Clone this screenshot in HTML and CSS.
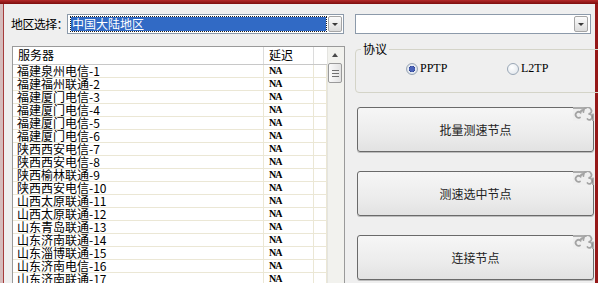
FILE: index.html
```html
<!DOCTYPE html>
<html lang="zh-CN">
<head>
  <meta charset="UTF-8" />
  <title>节点选择</title>
  <link rel="stylesheet" href="styles.css">
</head>
<body>
  <div class="titlebar"></div>
  <div class="window">
    <!-- top row: region + server combos -->
    <div class="toolbar">
      <div class="region">
        <span class="region-label">地区选择：</span>
        <div class="combo">
          <span class="combo-value selected">中国大陆地区</span>
          <span class="combo-btn"><i class="tri"></i></span>
        </div>
      </div>
      <div class="combo server-combo">
        <span class="combo-value"></span>
        <span class="combo-btn"><i class="tri"></i></span>
      </div>
    </div>

    <div class="main">
      <!-- server list -->
      <div class="list">
        <table class="grid">
          <thead>
            <tr><th class="c-name">服务器</th><th class="c-ping">延迟</th><th class="c-pad"></th></tr>
          </thead>
          <tbody>
            <tr><td>福建泉州电信-1</td><td class="na">NA</td><td></td></tr>
            <tr><td>福建福州联通-2</td><td class="na">NA</td><td></td></tr>
            <tr><td>福建厦门电信-3</td><td class="na">NA</td><td></td></tr>
            <tr><td>福建厦门电信-4</td><td class="na">NA</td><td></td></tr>
            <tr><td>福建厦门电信-5</td><td class="na">NA</td><td></td></tr>
            <tr><td>福建厦门电信-6</td><td class="na">NA</td><td></td></tr>
            <tr><td>陕西西安电信-7</td><td class="na">NA</td><td></td></tr>
            <tr><td>陕西西安电信-8</td><td class="na">NA</td><td></td></tr>
            <tr><td>陕西榆林联通-9</td><td class="na">NA</td><td></td></tr>
            <tr><td>陕西西安电信-10</td><td class="na">NA</td><td></td></tr>
            <tr><td>山西太原联通-11</td><td class="na">NA</td><td></td></tr>
            <tr><td>山西太原联通-12</td><td class="na">NA</td><td></td></tr>
            <tr><td>山东青岛联通-13</td><td class="na">NA</td><td></td></tr>
            <tr><td>山东济南联通-14</td><td class="na">NA</td><td></td></tr>
            <tr><td>山东淄博联通-15</td><td class="na">NA</td><td></td></tr>
            <tr><td>山东济南电信-16</td><td class="na">NA</td><td></td></tr>
            <tr><td>山东济南联通-17</td><td class="na">NA</td><td></td></tr>
          </tbody>
        </table>
        <div class="scrollbar">
          <i class="up"></i>
          <div class="thumb"><b></b><b></b><b></b></div>
        </div>
      </div>

      <!-- protocol + actions -->
      <div class="side">
        <fieldset class="group">
          <legend>协议</legend>
          <div class="radios">
            <label class="radio"><span class="dot checked"></span>PPTP</label>
            <label class="radio"><span class="dot"></span>L2TP</label>
          </div>
        </fieldset>

        <button class="action">批量测速节点<svg class="swirl" viewBox="0 0 21 14"><path d="M0 1H13" class="edge" /><path d="M7 10.5a3 3 0 1 1 0.5 -5a3 3 0 0 1 3 -2.5" /><path d="M10.5 5a4 4 0 0 1 8 -1.5a3 3 0 0 1 -3 3.5a3 3 0 0 1 3.5 3a2.6 2.6 0 0 1 -4.5 2" /><path d="M20 7V14" class="edge" /></svg></button>
        <button class="action">测速选中节点<svg class="swirl" viewBox="0 0 21 14"><path d="M0 1H13" class="edge" /><path d="M7 10.5a3 3 0 1 1 0.5 -5a3 3 0 0 1 3 -2.5" /><path d="M10.5 5a4 4 0 0 1 8 -1.5a3 3 0 0 1 -3 3.5a3 3 0 0 1 3.5 3a2.6 2.6 0 0 1 -4.5 2" /><path d="M20 7V14" class="edge" /></svg></button>
        <button class="action">连接节点<svg class="swirl" viewBox="0 0 21 14"><path d="M0 1H13" class="edge" /><path d="M7 10.5a3 3 0 1 1 0.5 -5a3 3 0 0 1 3 -2.5" /><path d="M10.5 5a4 4 0 0 1 8 -1.5a3 3 0 0 1 -3 3.5a3 3 0 0 1 3.5 3a2.6 2.6 0 0 1 -4.5 2" /><path d="M20 7V14" class="edge" /></svg></button>
      </div>
    </div>
  </div>
</body>
</html>
```

FILE: styles.css
```css
body, html {
  margin: 0;
  padding: 0;
  overflow: hidden;
}

body {
  width: 598px;
  height: 283px;
  background-color: #efefef;
  font-family: "Noto Sans CJK SC", sans-serif;
  font-size: 12px;
  color: #000;
}

.titlebar {
  height: 4px;
  background: linear-gradient(#b42a2a, #7c0d0d);
}

.window {
  height: 279px;
  box-sizing: border-box;
  padding-left: 10px;
  border-right: 3px solid #951818;
  box-shadow: inset 3px 0 0 #d6bcbc, inset 4px 0 0 #a63c3c;
}

/* top row */
.toolbar {
  display: flex;
  height: 20px;
  padding-top: 10px;
}

.region {
  display: flex;
  align-items: center;
  width: 334px;
}

.region-label {
  flex: none;
  width: 56px;
  padding-left: 1px;
  white-space: nowrap;
  line-height: 20px;
  font-size: 12px;
  letter-spacing: -0.6px;
}

.combo {
  flex: 1;
  display: flex;
  align-items: center;
  height: 20px;
  box-sizing: border-box;
  border: 1px solid #8c9aaa;
  background-color: #fff;
  padding: 2px 1px 2px 3px;
}

.combo-value {
  flex: 1;
  height: 14px;
  line-height: 14px;
  padding-left: 1px;
}

.combo-value.selected {
  background-color: #316ac5;
  color: #fff;
  outline: 1px dotted #1c1c1c;
  margin-right: 2px;
}

.combo-btn {
  display: flex;
  align-items: center;
  justify-content: center;
  width: 14px;
  height: 16px;
  box-sizing: border-box;
  border: 1px solid #a5a5a5;
  border-radius: 2px;
  background: linear-gradient(#fbfbfb, #dcdcdc);
}

.tri {
  width: 0;
  height: 0;
  border-left: 3px solid transparent;
  border-right: 3px solid transparent;
  border-top: 3px solid #3a3a3a;
}

.server-combo {
  flex: none;
  width: 236px;
  margin-left: 11px;
  padding-right: 2px;
}

/* main area */
.main {
  display: flex;
  padding-top: 8px;
}

.list {
  display: flex;
  width: 333px;
  height: 240px;
  margin: 4px 0 0 2px;
  box-sizing: border-box;
  border: 1px solid #9a9a9a;
  background-color: #fff;
  overflow: hidden;
}

.grid {
  width: 315px;
  border-collapse: collapse;
  table-layout: fixed;
  align-self: flex-start;
}

.grid th {
  height: 16px;
  padding: 0 0 1px 5px;
  font-weight: normal;
  text-align: left;
  line-height: 14px;
  border-bottom: 1px solid #c8c8c8;
  border-right: 1px solid #dcdcdc;
}

.grid .c-name { width: 245px; }
.grid .c-ping { width: 44px; }
.grid .c-pad { border-right: none; }

.grid td {
  height: 12px;
  padding: 0 0 0 4px;
  line-height: 12px;
  white-space: nowrap;
  border-bottom: 1px solid #ebe7d5;
  border-right: 1px solid #ebe7d5;
}

.grid td.na {
  padding-left: 5px;
  font-family: "Liberation Serif", serif;
  font-size: 10px;
  font-weight: bold;
  letter-spacing: -1px;
}

.scrollbar {
  position: relative;
  width: 16px;
  background-color: #f2f2ee;
  border-left: 1px solid #e4e4e0;
}

.scrollbar .up {
  position: absolute;
  top: 6px;
  left: 4px;
  border-left: 3px solid transparent;
  border-right: 3px solid transparent;
  border-bottom: 4px solid #4a4a4a;
}

.thumb {
  position: absolute;
  top: 16px;
  left: 0;
  width: 14px;
  height: 20px;
  box-sizing: border-box;
  border: 1px solid #9a9a9a;
  border-radius: 2px;
  background: linear-gradient(to right, #fafafa, #e2e2e2);
  display: flex;
  flex-direction: column;
  align-items: center;
  justify-content: center;
  gap: 2px;
}

.thumb b {
  width: 7px;
  height: 1px;
  background-color: #707070;
}

/* side column */
.side {
  display: flex;
  flex-direction: column;
  width: 239px;
  margin-left: 10px;
}

.group {
  width: 238px;
  height: 51px;
  margin: 0;
  padding: 0;
  box-sizing: border-box;
  border: 1px solid #d4d4c8;
  border-radius: 4px;
}

.group legend {
  margin-left: 5px;
  padding: 0 2px;
  line-height: 14px;
  font-size: 12px;
}

.radios {
  display: flex;
  padding: 5px 0 0 50px;
}

.radio {
  display: flex;
  align-items: center;
  width: 101px;
  font-family: "Liberation Serif", serif;
  font-size: 12px;
  gap: 2px;
}

.dot {
  width: 12px;
  height: 12px;
  box-sizing: border-box;
  border-radius: 50%;
  border: 1px solid #9aa7b6;
  background: radial-gradient(circle at 40% 35%, #ffffff, #dde3ea);
}

.dot.checked {
  background: radial-gradient(circle, #4a62b8 0 2.5px, #2c3f8c 3px, #e8ecf2 3.5px, #cbd3de);
}

.action {
  position: relative;
  width: 237px;
  height: 45px;
  margin: 14px 0 5px 2px;
  padding: 0;
  border: 1px solid #6a6a6a;
  border-radius: 3px;
  background: linear-gradient(#f6f6f6, #ececec 60%, #e2e2e2);
  box-shadow: 0 1px 0 #bdbdbd;
  font-family: "Noto Sans CJK SC", sans-serif;
  font-size: 12px;
  color: #222;
}

.action + .action {
  margin-top: 14px;
}

/* corner ornament replaces the top-right corner of the button */
.swirl {
  position: absolute;
  top: -1px;
  right: -1px;
  width: 21px;
  height: 14px;
  background-color: #efefef;
  fill: none;
  stroke: #a4a4a4;
  stroke-width: 1.8;
  stroke-linecap: round;
}

.swirl .edge {
  stroke: #6a6a6a;
  stroke-width: 1;
}
```
